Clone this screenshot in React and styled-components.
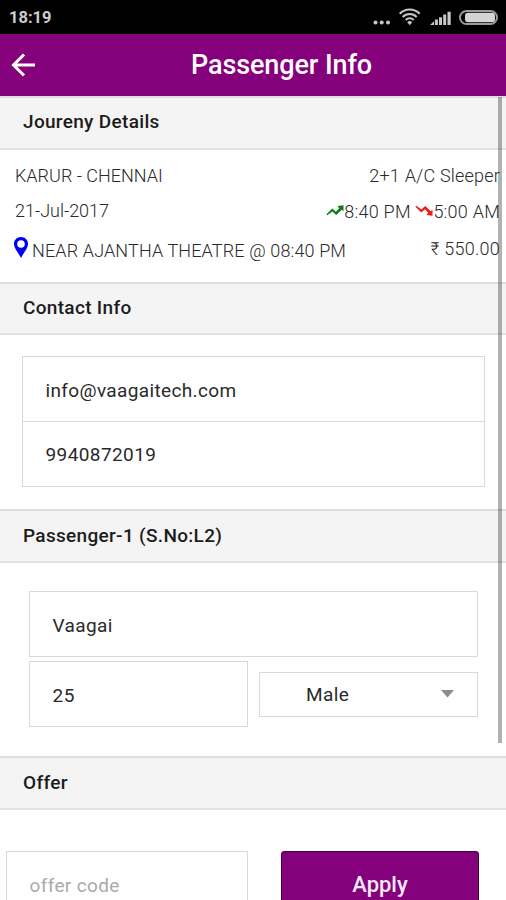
import React from 'react';
import styled, { createGlobalStyle } from 'styled-components';

const GlobalStyle = createGlobalStyle`
  * {
    box-sizing: border-box;
  }
  body {
    margin: 0;
    background: #fff;
    font-family: Roboto, "Liberation Sans", sans-serif;
    color: #2a2a2a;
  }
`;

const Screen = styled.div`
  position: relative;
  display: flex;
  flex-direction: column;
  width: 506px;
  height: 900px;
  overflow: hidden;
  background: #fff;
`;

const StatusBar = styled.div`
  flex: none;
  display: flex;
  align-items: center;
  justify-content: space-between;
  height: 34px;
  padding: 1px 5px 0 9px;
  background: #000;
  color: #ccc;
  font-size: 16.5px;
  font-weight: 700;

  svg {
    margin-bottom: 2px;
  }
`;

const Header = styled.header`
  flex: none;
  display: flex;
  align-items: center;
  height: 62px;
  padding-left: 11px;
  background: #85007b;
`;

const Title = styled.h1`
  flex: 1;
  margin: 0;
  padding-left: 21px;
  text-align: center;
  color: #fff;
  font-size: 27px;
  font-weight: 500;
  line-height: 60px;
  letter-spacing: -0.1px;
`;

const Divider = styled.h2`
  flex: none;
  height: ${props => props.$height || 54}px;
  margin: 0;
  padding-left: 23px;
  border-top: 2px solid #dedede;
  border-bottom: 2px solid #e2e2e2;
  background: #f4f4f4;
  color: #1c1c1c;
  font-size: 19px;
  font-weight: 500;
  line-height: ${props => props.$line || 48}px;
  letter-spacing: 0.32px;
`;

const Journey = styled.div`
  flex: none;
  height: 132px;
  padding: 8px 6px 0 15px;
`;

const JourneyRow = styled.div`
  display: flex;
  justify-content: space-between;
  height: 36px;
  line-height: 36px;
  font-size: 18px;
  font-weight: 300;
  white-space: nowrap;
`;

const Cell = styled.span`
  height: 36px;
  display: flex;
  align-items: center;
  margin-top: ${props => props.$drop || 0}px;
  letter-spacing: ${props => props.$spacing || 0}px;
`;

const Pin = styled.svg`
  flex: none;
  margin: 0 4px 7px -1px;
`;

const Trend = styled.svg`
  flex: none;
  margin-bottom: 3px;
`;

const ContactForm = styled.div`
  flex: none;
  height: 174px;
  padding: 21px 21px 0 22px;
`;

const Field = styled.div`
  height: 66px;
  padding: 0 23px 0 22.5px;
  border: 1px solid #d9d9d9;
  background: #fff;
  color: ${props => (props.$placeholder ? '#aaa' : '#2a2a2a')};
  font-size: 19px;
  line-height: 68px;
  letter-spacing: ${props => props.$spacing || 0.36}px;
`;

const PhoneField = styled(Field)`
  height: 65px;
  border-top: 0;
  line-height: 66px;
  letter-spacing: 0.4px;
`;

const PassengerForm = styled.div`
  flex: none;
  display: grid;
  grid-template-columns: 219px 219px;
  column-gap: 11px;
  row-gap: 4px;
  align-content: start;
  height: 193px;
  padding: 28px 28px 0 29px;
`;

const NameField = styled(Field)`
  grid-column: 1 / 3;
`;

const Select = styled.div`
  display: flex;
  align-items: center;
  justify-content: space-between;
  height: 45px;
  margin-top: 11px;
  padding: 0 23px 1px 46px;
  border: 1px solid #d9d9d9;
  font-size: 19px;
  letter-spacing: 0.4px;
`;

const OfferForm = styled.div`
  flex: none;
  display: flex;
  justify-content: space-between;
  padding: 41px 27px 0 6px;
`;

const OfferField = styled(Field)`
  width: 242px;
`;

const ApplyButton = styled.button`
  width: 198px;
  height: 66px;
  padding: 2px 0 0;
  border: 1.5px solid #43003e;
  border-radius: 3px;
  background: #85007b;
  color: #f9e9f8;
  font-family: inherit;
  font-size: 22px;
  font-weight: 500;
  line-height: 62px;
`;

const Scrollbar = styled.div`
  position: absolute;
  top: 97px;
  right: 4px;
  width: 4px;
  height: 646px;
  background: rgba(0, 0, 0, 0.3);
`;

function StatusIcons() {
  return (
    <svg width="128" height="22" viewBox="0 0 128 22" fill="#c8c8c8">
      <circle cx="2.5" cy="16.5" r="2" />
      <circle cx="8.7" cy="16.5" r="2" />
      <circle cx="15" cy="16.5" r="2" />
      <g fill="none" stroke="#c8c8c8" strokeWidth="2">
        <path d="M26.7 7.8a14 14 0 0 1 20 0" />
        <path d="M29.7 11a9.800 9.800 0 0 1 14 0" />
        <path d="M32.7 14a5.600 5.600 0 0 1 8 0" />
      </g>
      <path d="M34.2 16.2a3.600 3.600 0 0 1 5 0l-2.500 3z" />
      <path d="M57 19l4-3.700V19zM61.900 13.500h3V19h-3zM66 11.200h3V19h-3zM70.200 8.500h3V19h-3zM74.500 5.700h3.200V19h-3.200z" />
      <rect x="87" y="5" width="37" height="13" rx="6.5" fill="none" stroke="#9c9c9c" strokeWidth="2" />
      <rect x="92" y="6.7" width="30" height="9.6" rx="3" fill="#d4d4d4" />
    </svg>
  );
}

function BackIcon() {
  return (
    <svg width="25" height="24" viewBox="0 0 25 24" fill="none" stroke="#fff" strokeWidth="3">
      <path d="M24 12H3M13 1.500L2.500 12 13 22.500" />
    </svg>
  );
}

function PinIcon() {
  return (
    <Pin width="14" height="21" viewBox="0 0 14 21">
      <path
        fill="#0000f5"
        fillRule="evenodd"
        d="M7 0C3.100 0 0 2.900 0 6.700 0 11 4.500 16 7 21c2.500-5 7-10 7-14.300C14 2.900 10.900 0 7 0zm0 3.200a3.800 3.800 0 1 1 0 7.600 3.800 3.800 0 0 1 0-7.600z"
      />
    </Pin>
  );
}

function TrendIcon({ down }) {
  return (
    <Trend width="18" height="11" viewBox="0 0 17 11" fill={down ? '#f01818' : '#0c7a16'}>
      <g transform={down ? 'matrix(1 0 0 -1 0 11)' : undefined}>
        <path d="M0 9.200L5.800 3.500l3.600 3.200 3.300-3.500L11 1l6-.8v6l-1.800-1.500L9.700 10 5.900 6.600.8 10.200z" />
      </g>
    </Trend>
  );
}

export default function App() {
  return (
    <Screen>
      <GlobalStyle />
      <StatusBar>
        <span>18:19</span>
        <StatusIcons />
      </StatusBar>
      <Header>
        <BackIcon />
        <Title>Passenger Info</Title>
      </Header>

      <Divider>Joureny Details</Divider>
      <Journey>
        <JourneyRow>
          <Cell>KARUR - CHENNAI</Cell>
          <Cell $spacing={0.2}>2+1 A/C Sleeper</Cell>
        </JourneyRow>
        <JourneyRow>
          <Cell $drop={-1}>21-Jul-2017</Cell>
          <Cell $spacing={0.24}>
            <TrendIcon />8:40 PM&nbsp;<TrendIcon down />5:00 AM
          </Cell>
        </JourneyRow>
        <JourneyRow>
          <Cell $drop={3} $spacing={0.13}>
            <PinIcon />NEAR AJANTHA THEATRE @ 08:40 PM
          </Cell>
          <Cell $drop={1} $spacing={0.25}>₹ 550.00</Cell>
        </JourneyRow>
      </Journey>

      <Divider $height={53}>Contact Info</Divider>
      <ContactForm>
        <Field>info@vaagaitech.com</Field>
        <PhoneField>9940872019</PhoneField>
      </ContactForm>

      <Divider $line={50}>Passenger-1 (S.No:L2)</Divider>
      <PassengerForm>
        <NameField>Vaagai</NameField>
        <Field $spacing={0.5}>25</Field>
        <Select>
          Male
          <svg width="13" height="8" viewBox="0 0 13 8" fill="#8c8c8c">
            <path d="M0 0h13L6.500 7.500z" />
          </svg>
        </Select>
      </PassengerForm>

      <Divider $line={50}>Offer</Divider>
      <OfferForm>
        <OfferField $placeholder>offer code</OfferField>
        <ApplyButton>Apply</ApplyButton>
      </OfferForm>
      <Scrollbar />
    </Screen>
  );
}
